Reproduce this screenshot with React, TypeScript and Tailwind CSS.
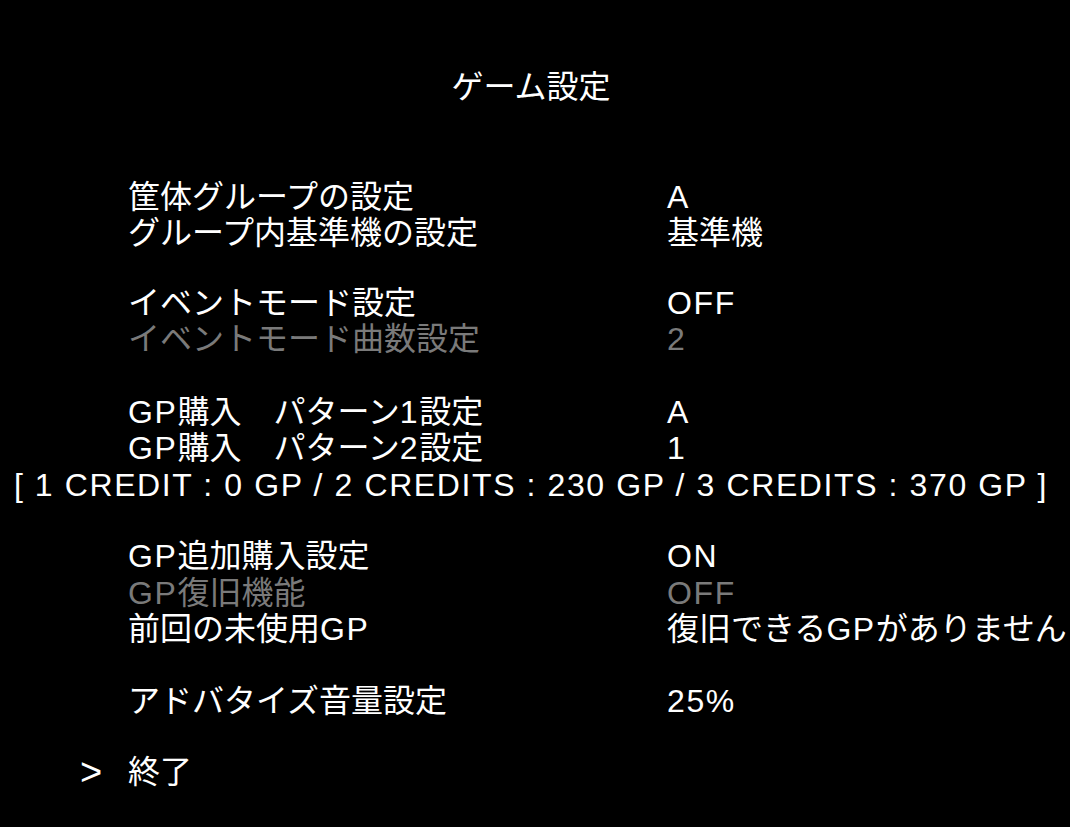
import React from "react";

function T({ text }: { text: string }) {
  const parts = text.split(/([\x00-\x7F]+)/).filter((p) => p.length > 0);
  return (
    <>
      {parts.map((p, i) =>
        /^[\x00-\x7F]+$/.test(p) ? (
          <span key={i} className="tracking-[0.05em]">
            {p}
          </span>
        ) : (
          <span key={i}>{p}</span>
        )
      )}
    </>
  );
}

type Row = { label: string; value: string; dim?: boolean };

function Rows({ rows, className }: { rows: Row[]; className: string }) {
  return (
    <div className={className}>
      {rows.map((r, i) => (
        <div
          key={i}
          className={`grid grid-cols-[539px_1fr] pl-[128px] h-[36.5px] leading-[36.5px] whitespace-nowrap ${
            r.dim ? "text-[#7a7a7a]" : "text-white"
          }`}
        >
          <div>
            <T text={r.label} />
          </div>
          <div>
            <T text={r.value} />
          </div>
        </div>
      ))}
    </div>
  );
}

export default function App() {
  return (
    <div
      className="w-[1070px] h-[827px] bg-black text-white overflow-hidden text-[32px]"
      style={{ fontFamily: '"Liberation Sans", "Noto Sans CJK JP", sans-serif' }}
    >
      <div className="pt-[69px] h-[36.5px] leading-[36.5px] text-center pr-[8px] box-content">
        ゲーム設定
      </div>
      <Rows
        className="mt-[73px]"
        rows={[
          { label: "筐体グループの設定", value: "A" },
          { label: "グループ内基準機の設定", value: "基準機" },
        ]}
      />
      <Rows
        className="mt-[33px]"
        rows={[
          { label: "イベントモード設定", value: "OFF" },
          { label: "イベントモード曲数設定", value: "2", dim: true },
        ]}
      />
      <Rows
        className="mt-[36px]"
        rows={[
          { label: "GP購入　パターン1設定", value: "A" },
          { label: "GP購入　パターン2設定", value: "1" },
        ]}
      />
      <div className="h-[36.5px] leading-[36.5px] text-center whitespace-nowrap pr-[8px]">
        <T text="[ 1 CREDIT : 0 GP / 2 CREDITS : 230 GP / 3 CREDITS : 370 GP ]" />
      </div>
      <Rows
        className="mt-[35px]"
        rows={[
          { label: "GP追加購入設定", value: "ON" },
          { label: "GP復旧機能", value: "OFF", dim: true },
          { label: "前回の未使用GP", value: "復旧できるGPがありません" },
        ]}
      />
      <Rows
        className="mt-[35px]"
        rows={[{ label: "アドバタイズ音量設定", value: "25%" }]}
      />
      <div className="mt-[35px] flex items-center h-[36.5px] leading-[36.5px] whitespace-nowrap">
        <span className="w-[128px] pl-[80px] text-[38px] leading-[36.5px] font-light">&gt;</span>
        <span>終了</span>
      </div>
    </div>
  );
}
